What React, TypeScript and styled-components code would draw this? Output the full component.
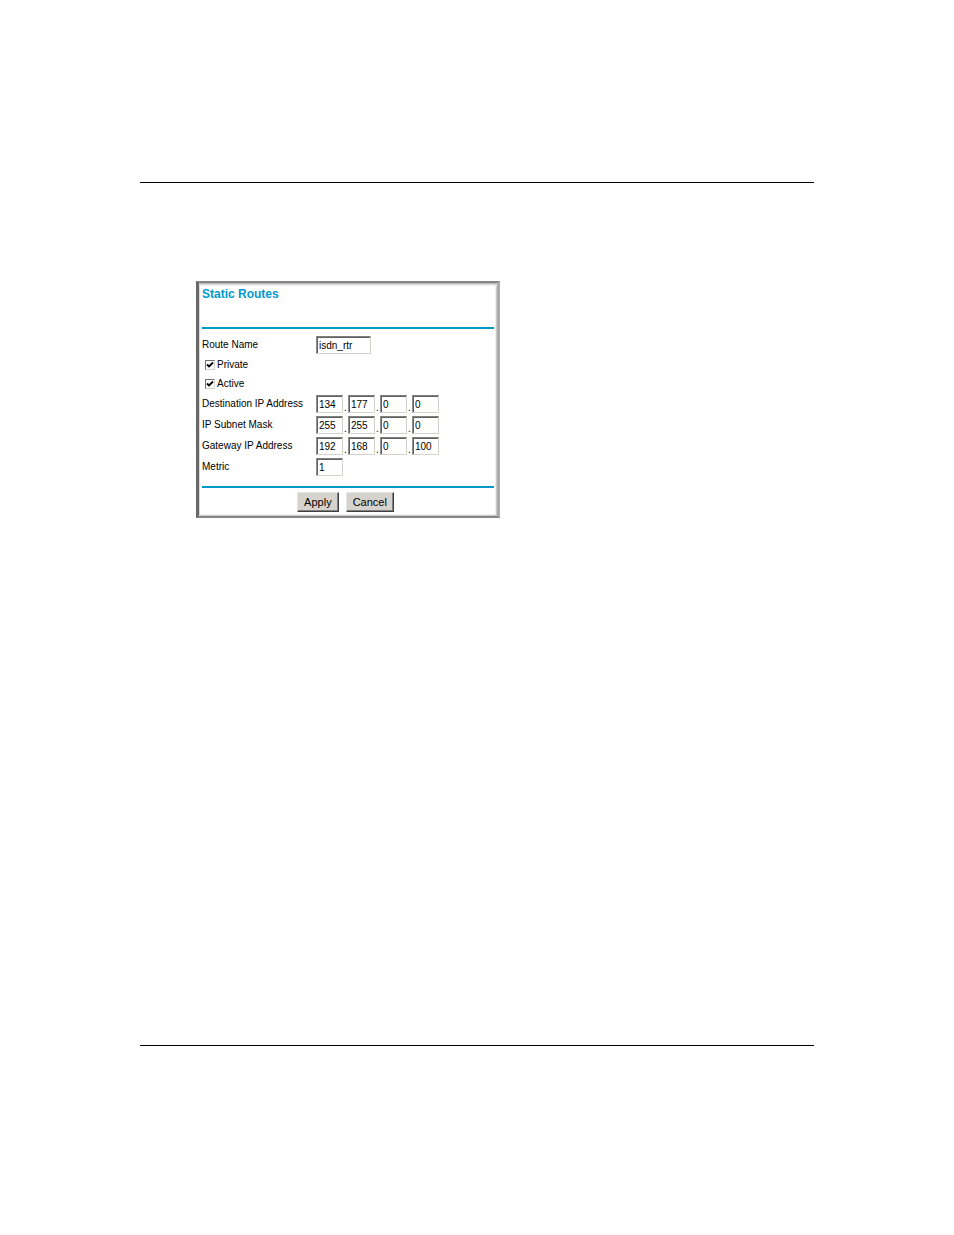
import { Fragment, useState } from 'react';
import styled, { createGlobalStyle } from 'styled-components';

const GlobalStyle = createGlobalStyle`
  :root {
    --accent-color: #0099cc;
    --button-color: #d6d3ce;
  }

  * {
    box-sizing: border-box;
  }

  body {
    margin: 0;
    background: #ffffff;
    color: #000000;
    font-family: 'Liberation Sans', Arial, sans-serif;
    font-size: 10px;
  }
`;

const Page = styled.div`
  min-height: 100vh;
  padding: 0 140px;
  display: flex;
  flex-direction: column;
`;

const Header = styled.header`
  height: 183px;
  border-bottom: 1px solid #000000;
`;

const Main = styled.main`
  flex: 1;
  padding: 98px 56px;
`;

const Footer = styled.footer`
  height: 190px;
  border-top: 1px solid #000000;
`;

const Panel = styled.form`
  width: 100%;
  max-width: 304px;
  padding: 4px 3px 4px 3px;
  border-style: solid;
  border-width: 2px 3px 2px;
  border-color: #868686 #ababab #868686 #686868;
  box-shadow: inset 0 1px 0 #b8b8b8, inset 0 2px 0 #dcdcdc, inset 0 3px 0 #f2f2f2,
    inset 1px 0 0 #d8d8d8, inset -1px -1px 0 #cccccc, inset -2px -2px 0 #f0f0f0;
`;

const Title = styled.h1`
  height: 40px;
  margin: 0;
  color: var(--accent-color);
  font-size: 12px;
  line-height: 14px;
`;

const Divider = styled.hr`
  height: 2px;
  margin: 0;
  border: 0;
  background: var(--accent-color);
`;

const Fields = styled.div`
  padding: 5px 0 9px;
`;

const Row = styled.div`
  min-height: 21px;
  display: grid;
  grid-template-columns: 114px 1fr;
  align-items: center;
`;

const CheckRow = styled.label`
  height: 19px;
  padding-left: 3px;
  display: flex;
  align-items: center;
  gap: 2px;
`;

const Checkbox = styled.input`
  appearance: none;
  width: 10px;
  height: 10px;
  margin: 0;
  border: 1px solid;
  border-color: #707070 #d6d3ce #d6d3ce #707070;
  background: #ffffff;

  &:checked {
    background: #ffffff
      url("data:image/svg+xml,%3Csvg xmlns='http://www.w3.org/2000/svg' viewBox='0 0 8 8'%3E%3Cpath d='M1 3.5 3 5.5 7 1.5' fill='none' stroke='%23000' stroke-width='1.8'/%3E%3C/svg%3E")
      center / 8px 8px no-repeat;
  }
`;

const TextInput = styled.input<{ $wide?: boolean }>`
  width: ${({ $wide }) => ($wide ? '55px' : '27px')};
  height: 18px;
  padding: 1px 1px 0 2px;
  border: 1px solid;
  border-color: #808080 #d6d3ce #d6d3ce #909090;
  border-radius: 0;
  box-shadow: inset 1px 1px 0 #606060;
  background: #ffffff;
  color: #000000;
  font: inherit;
`;

const IpGroup = styled.div`
  display: flex;
  align-items: flex-end;
`;

const Dot = styled.span`
  width: 5px;
  text-align: center;
`;

const Actions = styled.div`
  padding: 4px 5px 0 0;
  display: flex;
  justify-content: center;
  gap: 7px;
`;

const Button = styled.button`
  height: 20px;
  padding: 0 6px;
  border: 1px solid;
  border-color: #e8e6e2 #404040 #404040 #e8e6e2;
  border-radius: 0;
  box-shadow: inset -1px -1px 0 #808080;
  background: var(--button-color);
  color: #000000;
  font-family: inherit;
  font-size: 11px;
`;

type IpRowProps = {
  id: string;
  label: string;
  address: string[];
};

function IpRow({ id, label, address }: IpRowProps) {
  const [octets, setOctets] = useState(address);

  const changeOctet = (index: number, value: string) =>
    setOctets(octets.map((octet, i) => (i === index ? value : octet)));

  return (
    <Row>
      <label htmlFor={`${id}-0`}>{label}</label>
      <IpGroup>
        {octets.map((octet, i) => (
          <Fragment key={i}>
            {i > 0 && <Dot>.</Dot>}
            <TextInput
              id={`${id}-${i}`}
              aria-label={`${label} ${i + 1}`}
              maxLength={3}
              value={octet}
              onChange={(e) => changeOctet(i, e.target.value)}
            />
          </Fragment>
        ))}
      </IpGroup>
    </Row>
  );
}

export default function App() {
  return (
    <>
      <GlobalStyle />
      <Page>
        <Header />
        <Main>
          <Panel onSubmit={(e) => e.preventDefault()}>
            <Title>Static Routes</Title>
            <Divider />
            <Fields>
              <Row>
                <label htmlFor="route-name">Route Name</label>
                <TextInput id="route-name" $wide defaultValue="isdn_rtr" />
              </Row>
              <CheckRow>
                <Checkbox type="checkbox" defaultChecked />
                Private
              </CheckRow>
              <CheckRow>
                <Checkbox type="checkbox" defaultChecked />
                Active
              </CheckRow>
              <IpRow id="destination" label="Destination IP Address" address={['134', '177', '0', '0']} />
              <IpRow id="subnet" label="IP Subnet Mask" address={['255', '255', '0', '0']} />
              <IpRow id="gateway" label="Gateway IP Address" address={['192', '168', '0', '100']} />
              <Row>
                <label htmlFor="metric">Metric</label>
                <TextInput id="metric" defaultValue="1" />
              </Row>
            </Fields>
            <Divider />
            <Actions>
              <Button type="submit">Apply</Button>
              <Button type="button">Cancel</Button>
            </Actions>
          </Panel>
        </Main>
        <Footer />
      </Page>
    </>
  );
}
